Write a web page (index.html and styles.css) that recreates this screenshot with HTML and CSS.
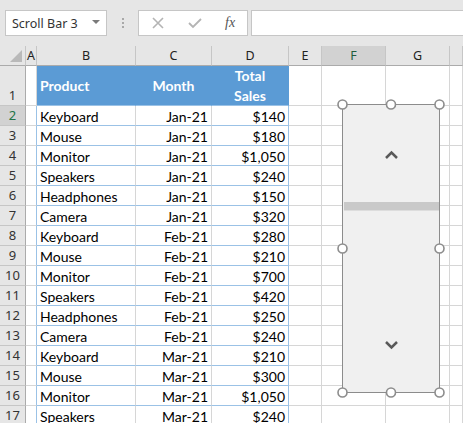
FILE: index.html
```html
<!DOCTYPE html>
<html>
<head>
<meta charset="utf-8">
<link rel="stylesheet" href="styles.css">
</head>
<body>
<div class="toolbar">
  <div class="namebox"><span>Scroll Bar 3</span><span class="dd"></span></div>
  <div class="dots"><i></i><i></i><i></i></div>
  <div class="fbtns">
    <svg class="ico" width="14" height="14" viewBox="0 0 14 14"><path d="M2 2L12 12M12 2L2 12" stroke="#b4b4b4" stroke-width="1.6" fill="none"/></svg>
    <svg class="ico" width="16" height="14" viewBox="0 0 16 14"><path d="M2 7L6 11L14 3" stroke="#b4b4b4" stroke-width="1.8" fill="none"/></svg>
    <span class="fx">fx</span>
  </div>
  <div class="finput"></div>
</div>
<div class="sheet">
  <div class="corner"><span class="tri"></span></div>
  <div class="ch">A</div><div class="ch">B</div><div class="ch">C</div><div class="ch">D</div><div class="ch">E</div><div class="ch sel">F</div><div class="ch">G</div><div class="ch"></div>

  <div class="rh r1">1</div><div class="c a1"></div><div class="c th">Product</div><div class="c th ctr">Month</div><div class="c th ctr two">Total<br>Sales</div><div class="c"></div><div class="c"></div><div class="c"></div><div class="c"></div>

  <div class="rh sel">2</div><div class="c a"></div><div class="c b">Keyboard</div><div class="c m">Jan-21</div><div class="c s">$140</div><div class="c"></div><div class="c"></div><div class="c"></div><div class="c"></div>
  <div class="rh">3</div><div class="c a"></div><div class="c b">Mouse</div><div class="c m">Jan-21</div><div class="c s">$180</div><div class="c"></div><div class="c"></div><div class="c"></div><div class="c"></div>
  <div class="rh">4</div><div class="c a"></div><div class="c b">Monitor</div><div class="c m">Jan-21</div><div class="c s">$1,050</div><div class="c"></div><div class="c"></div><div class="c"></div><div class="c"></div>
  <div class="rh">5</div><div class="c a"></div><div class="c b">Speakers</div><div class="c m">Jan-21</div><div class="c s">$240</div><div class="c"></div><div class="c"></div><div class="c"></div><div class="c"></div>
  <div class="rh">6</div><div class="c a"></div><div class="c b">Headphones</div><div class="c m">Jan-21</div><div class="c s">$150</div><div class="c"></div><div class="c"></div><div class="c"></div><div class="c"></div>
  <div class="rh">7</div><div class="c a"></div><div class="c b">Camera</div><div class="c m">Jan-21</div><div class="c s">$320</div><div class="c"></div><div class="c"></div><div class="c"></div><div class="c"></div>
  <div class="rh">8</div><div class="c a"></div><div class="c b">Keyboard</div><div class="c m">Feb-21</div><div class="c s">$280</div><div class="c"></div><div class="c"></div><div class="c"></div><div class="c"></div>
  <div class="rh">9</div><div class="c a"></div><div class="c b">Mouse</div><div class="c m">Feb-21</div><div class="c s">$210</div><div class="c"></div><div class="c"></div><div class="c"></div><div class="c"></div>
  <div class="rh">10</div><div class="c a"></div><div class="c b">Monitor</div><div class="c m">Feb-21</div><div class="c s">$700</div><div class="c"></div><div class="c"></div><div class="c"></div><div class="c"></div>
  <div class="rh">11</div><div class="c a"></div><div class="c b">Speakers</div><div class="c m">Feb-21</div><div class="c s">$420</div><div class="c"></div><div class="c"></div><div class="c"></div><div class="c"></div>
  <div class="rh">12</div><div class="c a"></div><div class="c b">Headphones</div><div class="c m">Feb-21</div><div class="c s">$250</div><div class="c"></div><div class="c"></div><div class="c"></div><div class="c"></div>
  <div class="rh">13</div><div class="c a"></div><div class="c b">Camera</div><div class="c m">Feb-21</div><div class="c s">$240</div><div class="c"></div><div class="c"></div><div class="c"></div><div class="c"></div>
  <div class="rh">14</div><div class="c a"></div><div class="c b">Keyboard</div><div class="c m">Mar-21</div><div class="c s">$210</div><div class="c"></div><div class="c"></div><div class="c"></div><div class="c"></div>
  <div class="rh">15</div><div class="c a"></div><div class="c b">Mouse</div><div class="c m">Mar-21</div><div class="c s">$300</div><div class="c"></div><div class="c"></div><div class="c"></div><div class="c"></div>
  <div class="rh">16</div><div class="c a"></div><div class="c b">Monitor</div><div class="c m">Mar-21</div><div class="c s">$1,050</div><div class="c"></div><div class="c"></div><div class="c"></div><div class="c"></div>
  <div class="rh">17</div><div class="c a"></div><div class="c b">Speakers</div><div class="c m">Mar-21</div><div class="c s">$240</div><div class="c"></div><div class="c"></div><div class="c"></div><div class="c"></div>
</div>
<svg class="scrollctl" width="110" height="301" viewBox="0 0 110 301">
  <rect x="6.5" y="6.5" width="97" height="288" fill="#f0f0f0" stroke="#8c8c8c" stroke-width="1"/>
  <rect x="8" y="104" width="95" height="8.5" fill="#c9c9c9"/>
  <polyline points="50,60 55.5,54.5 61,60" fill="none" stroke="#595959" stroke-width="2.5"/>
  <polyline points="50,244 55.5,249.5 61,244" fill="none" stroke="#595959" stroke-width="2.5"/>
  <g fill="#fff" stroke="#8c8c8c" stroke-width="1.6">
    <circle cx="6.5" cy="6.5" r="4.5"/>
    <circle cx="55" cy="6.5" r="4.5"/>
    <circle cx="103.5" cy="6.5" r="4.5"/>
    <circle cx="6.5" cy="150.5" r="4.5"/>
    <circle cx="103.5" cy="150.5" r="4.5"/>
    <circle cx="6.5" cy="294.5" r="4.5"/>
    <circle cx="55" cy="294.5" r="4.5"/>
    <circle cx="103.5" cy="294.5" r="4.5"/>
  </g>
</svg>
</body>
</html>
```
FILE: styles.css
```css
html, body {
  margin: 0;
  padding: 0;
  width: 463px;
  height: 423px;
  overflow: hidden;
  background: #fff;
}
.toolbar {
  height: 46px;
  box-sizing: border-box;
  background: #e6e6e6;
  display: flex;
  align-items: flex-start;
  padding-top: 10px;
}
.namebox {
  margin-left: 5px;
  width: 102px;
  height: 26px;
  box-sizing: border-box;
  background: #fff;
  border: 1px solid #c6c6c6;
  display: flex;
  align-items: center;
  justify-content: space-between;
  padding: 0 6px 0 6px;
  font-family: "Noto Sans", sans-serif;
  font-size: 12.5px;
  color: #333;
}
.dd {
  width: 0;
  height: 0;
  border-left: 4px solid transparent;
  border-right: 4px solid transparent;
  border-top: 4px solid #7a7a7a;
  margin-top: -2px;
}
.dots {
  width: 31px;
  height: 26px;
  display: flex;
  flex-direction: column;
  align-items: center;
  justify-content: center;
  gap: 2px;
}
.dots i {
  width: 2px;
  height: 2px;
  background: #a8a8a8;
}
.fbtns {
  width: 110px;
  height: 26px;
  box-sizing: border-box;
  background: #fff;
  border: 1px solid #c6c6c6;
  display: flex;
  align-items: center;
  padding-left: 12px;
  gap: 22px;
}
.fx {
  font-family: "Liberation Serif", serif;
  font-style: italic;
  font-size: 14px;
  color: #555;
  margin-left: 0;
}
.finput {
  margin-left: 3px;
  flex: 1;
  height: 26px;
  box-sizing: border-box;
  background: #fff;
  border: 1px solid #c6c6c6;
  border-right: none;
}
.sheet {
  display: grid;
  grid-template-columns: 26px 11px 99px 76px 77px 33px 64px 64px 1fr;
  grid-template-rows: 20px 40px;
  grid-auto-rows: 20px;
}
.corner {
  position: relative;
  background: #e6e6e6;
  border-right: 1px solid #c6c6c6;
  border-bottom: 1px solid #ababab;
  box-sizing: border-box;
}
.tri {
  position: absolute;
  right: 3px;
  bottom: 3px;
  width: 0;
  height: 0;
  border-left: 12px solid transparent;
  border-bottom: 12px solid #b9b9b9;
}
.ch {
  background: #e6e6e6;
  border-right: 1px solid #c6c6c6;
  border-bottom: 1px solid #ababab;
  box-sizing: border-box;
  text-align: center;
  font-family: "Noto Sans", sans-serif;
  font-size: 12.5px;
  line-height: 19px;
  color: #222;
}
.ch.sel {
  background: #d2d2d2;
  color: #1f5c3c;
}
.rh {
  background: #e6e6e6;
  border-right: 1px solid #ababab;
  border-bottom: 1px solid #c6c6c6;
  box-sizing: border-box;
  display: flex;
  align-items: flex-end;
  justify-content: center;
  font-family: "Noto Sans", sans-serif;
  font-size: 13px;
  line-height: 19px;
  color: #333;
}
.rh.sel {
  background: #d2d2d2;
  color: #217346;
}
.c {
  box-sizing: border-box;
  background: #fff;
  border-right: 1px solid #d6d6d6;
  border-bottom: 1px solid #d6d6d6;
  font-family: Lato, "Liberation Sans", sans-serif;
  font-size: 14px;
  line-height: 19px;
  padding: 1px 3px 0 3px;
  color: #000;
  white-space: nowrap;
}
.c.a {
  border-right-color: #9bc2e6;
}
.c.b, .c.m, .c.s {
  border-bottom-color: #9bc2e6;
}
.c.m, .c.s {
  text-align: right;
}
.c.s {
  border-right-color: #9bc2e6;
}
.c.th {
  background: #5b9bd5;
  color: #fff;
  font-weight: bold;
  line-height: 20px;
  padding-top: 0;
  border-right-color: #5b9bd5;
  border-bottom-color: #9bc2e6;
  display: flex;
  align-items: center;
}
.c.th.ctr {
  justify-content: center;
  text-align: center;
}
.scrollctl {
  position: absolute;
  left: 336px;
  top: 98px;
}
```
